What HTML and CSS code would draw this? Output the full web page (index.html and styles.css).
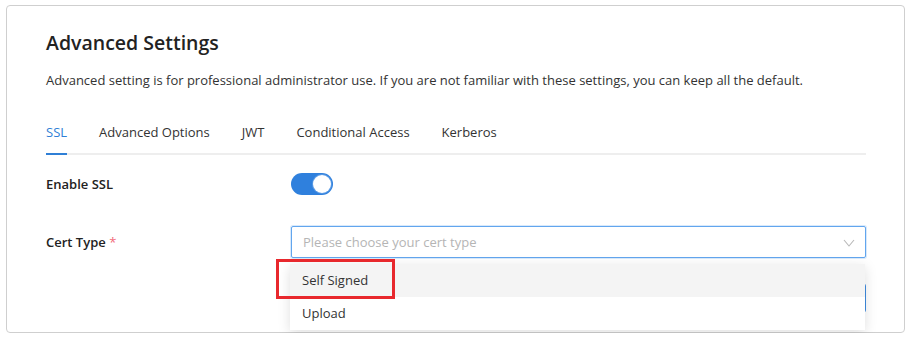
FILE: index.html
```html
<!DOCTYPE html>
<html>
<head>
<meta charset="utf-8">
<link rel="stylesheet" href="styles.css">
</head>
<body>
<div class="card">
  <h1 class="title">Advanced Settings</h1>
  <p class="desc">Advanced setting is for professional administrator use. If you are not familiar with these settings, you can keep all the default.</p>
  <div class="tabs">
    <span class="tab active">SSL</span>
    <span class="tab">Advanced Options</span>
    <span class="tab">JWT</span>
    <span class="tab">Conditional Access</span>
    <span class="tab">Kerberos</span>
  </div>
  <div class="row row-ssl">
    <div class="label">Enable SSL</div>
    <div class="toggle"><span class="knob"></span></div>
  </div>
  <div class="row row-cert">
    <div class="label">Cert Type <span class="req">*</span></div>
    <div class="field">
      <div class="select">
        <span class="placeholder">Please choose your cert type</span>
        <svg class="chev" width="12" height="8" viewBox="0 0 12 8"><polyline points="1,1 6,7 11,1" fill="none" stroke="#b8b8b8" stroke-width="1.1"/></svg>
      </div>
      <div class="dropdown">
        <div class="item hover">Self Signed</div>
        <div class="item">Upload</div>
        <div class="mark"></div>
      </div>
    </div>
  </div>
  <div class="row row-under">
    <div class="label"></div>
    <div class="under"></div>
  </div>
</div>
</body>
</html>
```

FILE: styles.css
```css
* { box-sizing: border-box; }
html, body { margin: 0; padding: 0; background: #fff; }
body {
  padding: 5px 6px 0 6px;
  font-family: "Open Sans", "Noto Sans", sans-serif;
  font-size: 13px;
  color: #333;
}
.card {
  width: 899px;
  border: 1px solid #cfcfcf;
  border-radius: 4px;
  padding: 24px 38px 19px 39px;
  display: flex;
  flex-direction: column;
}
.title {
  margin: 0;
  font-size: 19.5px;
  line-height: 26px;
  font-weight: 600;
  color: #222;
}
.desc {
  margin: 14px 0 0 0;
  line-height: 20px;
  color: #333;
}
.tabs {
  margin-top: 32px;
  display: flex;
  gap: 32px;
  border-bottom: 2px solid #eeeeee;
}
.tab {
  line-height: 20px;
  padding-bottom: 11px;
  margin-bottom: -2px;
  border-bottom: 2px solid transparent;
  color: #333;
}
.tab.active {
  color: #2f7fd6;
  border-bottom-color: #2f7fd6;
}
.row {
  display: flex;
  align-items: center;
}
.row-ssl { margin-top: 18px; }
.row-cert { margin-top: 31px; }
.row-under { margin-top: 25px; }
.label {
  width: 245px;
  flex: none;
  font-weight: 600;
  color: #222;
}
.req { color: #f26b7a; font-weight: 400; }
.toggle {
  width: 42px;
  height: 22px;
  border-radius: 11px;
  background: #2f80dd;
  position: relative;
}
.knob {
  position: absolute;
  right: 2px;
  top: 2px;
  width: 18px;
  height: 18px;
  border-radius: 50%;
  background: #fff;
  box-shadow: 0 0 0 1px #5b9be6;
}
.field {
  flex: 1;
  position: relative;
}
.select {
  height: 32px;
  border: 1px solid #62a6ee;
  border-radius: 2px;
  display: flex;
  align-items: center;
  justify-content: space-between;
  padding: 0 10px 0 11px;
  box-shadow: 0 0 0 1px rgba(98,166,238,0.25);
}
.placeholder { color: #b5b5b5; }
.chev { margin-top: 1px; }
.dropdown {
  position: absolute;
  top: calc(100% + 6px);
  left: -1px;
  right: 1px;
  background: #fff;
  box-shadow: 0 3px 12px rgba(0,0,0,0.13);
  z-index: 5;
}
.item {
  height: 33px;
  line-height: 33px;
  padding-left: 12px;
  color: #333;
}
.item.hover { background: #f4f4f4; }
.mark {
  position: absolute;
  left: -14px;
  top: -5px;
  width: 119px;
  height: 40px;
  border: 3px solid #e8282d;
}
.under {
  flex: 1;
  height: 30px;
  border: 1px solid #3f8ce0;
  border-radius: 3px;
}
```
